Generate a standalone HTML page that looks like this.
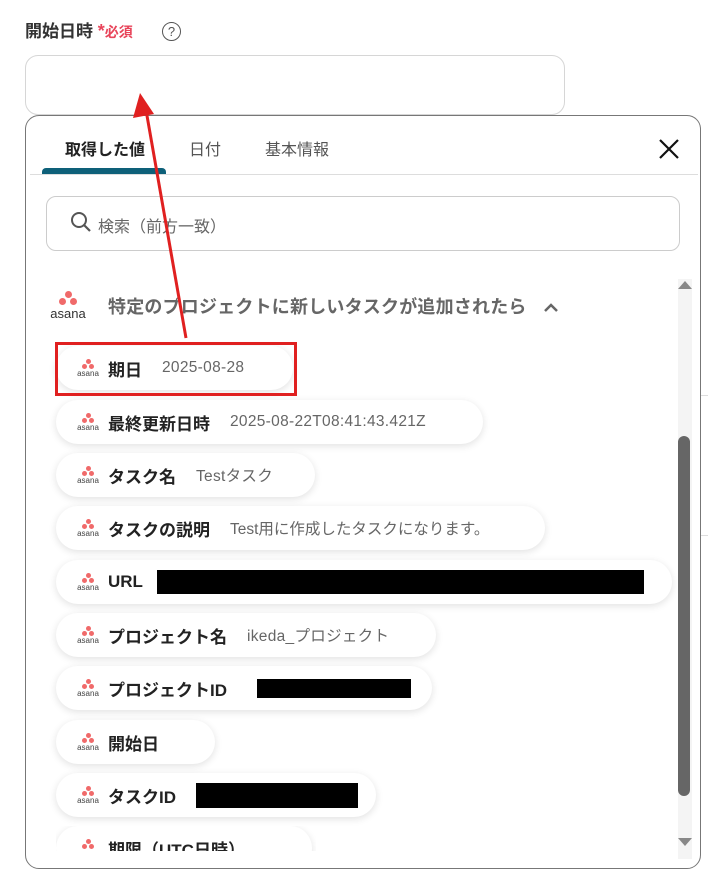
<!DOCTYPE html>
<html><head><meta charset="utf-8"><style>
body{margin:0;width:708px;height:869px;background:#fff;font-family:"Liberation Sans","Noto Sans CJK JP",sans-serif;position:relative;overflow:hidden;color:#222}
.a{position:absolute}
.pill{position:absolute;left:56px;height:44px;border-radius:22px;background:#fff;box-shadow:0 2px 8px rgba(0,0,0,.12);display:flex;align-items:center;white-space:nowrap}
.pill .lg{width:28px;margin-left:18px;margin-right:6px;text-align:center;font-size:8px;line-height:8px;color:#444}
.dots{position:relative;height:10px;width:12px;margin:0 auto 1px}
.dots i{position:absolute;width:5px;height:5px;border-radius:50%;background:#f06a6a}
.k{font-size:17px;font-weight:bold;color:#222;margin-right:20px}
.v{font-size:15.5px;color:#666;letter-spacing:.3px}
.blk{background:#000;height:24px}
</style></head><body>
<div class="a" style="left:25px;top:17px;font-size:17px;font-weight:bold;color:#333">開始日時 <span style="color:#e8445a;font-size:18px">*</span><span style="color:#e8445a;font-size:14px">必須</span></div>
<div class="a" style="left:162px;top:22px;width:17px;height:17px;border:1.5px solid #555;border-radius:50%;font-size:13px;text-align:center;line-height:17px;color:#555">?</div>
<div class="a" style="left:25px;top:55px;width:538px;height:58px;border:1px solid #d6d6d6;border-radius:13px"></div>
<div class="a" style="left:700px;top:395px;width:8px;height:1px;background:#ddd"></div>
<div class="a" style="left:700px;top:535px;width:8px;height:1px;background:#ddd"></div>
<div class="a" style="left:25px;top:115px;width:674px;height:752px;border:1px solid #777;border-radius:14px;background:#fff;overflow:hidden">
 <div class="a" style="left:39px;top:20px;font-size:16px;font-weight:bold;color:#222">取得した値</div>
 <div class="a" style="left:163px;top:20px;font-size:16px;color:#555">日付</div>
 <div class="a" style="left:239px;top:20px;font-size:16px;color:#555">基本情報</div>
 <svg class="a" style="left:632px;top:22px" width="22" height="22"><path d="M2 2L20 20M20 2L2 20" stroke="#111" stroke-width="2.2"/></svg>
 <div class="a" style="left:16px;top:52px;width:124px;height:6px;background:#0e6079;border-radius:4px 4px 0 0"></div>
 <div class="a" style="left:4px;top:58px;width:668px;height:1px;background:#ddd"></div>
 <div class="a" style="left:20px;top:80px;width:632px;height:53px;border:1px solid #ccc;border-radius:10px"></div>
 <svg class="a" style="left:44px;top:95px" width="22" height="22"><circle cx="9" cy="9" r="7" fill="none" stroke="#555" stroke-width="2"/><path d="M14 14L20 20" stroke="#555" stroke-width="2.2"/></svg>
 <div class="a" style="left:72px;top:97px;font-size:16px;color:#666">検索（前方一致）</div>
 <div class="a" style="left:20px;top:175px;width:44px;text-align:center;font-size:13px;color:#333"><div class="dots" style="width:18px;height:14px"><i style="left:6px;top:0;width:7px;height:7px"></i><i style="left:0;top:7px;width:7px;height:7px"></i><i style="left:11px;top:7px;width:7px;height:7px"></i></div>asana</div>
 <div class="a" style="left:82px;top:177px;font-size:18px;font-weight:bold;color:#666;letter-spacing:.2px">特定のプロジェクトに新しいタスクが追加されたら</div>
 <svg class="a" style="left:517px;top:185px" width="16" height="12"><path d="M2 10L8 4L14 10" fill="none" stroke="#666" stroke-width="2.5"/></svg>
 <div class="a" style="left:652px;top:163px;width:14px;height:580px;background:#f4f4f4"></div>
 <svg class="a" style="left:651px;top:163px" width="16" height="12"><path d="M1 10L8 2L15 10Z" fill="#888"/></svg>
 <svg class="a" style="left:651px;top:720px" width="16" height="12"><path d="M1 2L8 10L15 2Z" fill="#888"/></svg>
 <div class="a" style="left:652px;top:320px;width:12px;height:360px;background:#666;border-radius:6px"></div>
</div>
<div class="pill" style="top:346px;width:237px"><div class="lg"><div class="dots"><i style="left:3.5px;top:0"></i><i style="left:0;top:5px"></i><i style="left:7px;top:5px"></i></div>asana</div><span class="k">期日</span><span class="v">2025-08-28</span></div>
<div class="pill" style="top:400px;width:427px"><div class="lg"><div class="dots"><i style="left:3.5px;top:0"></i><i style="left:0;top:5px"></i><i style="left:7px;top:5px"></i></div>asana</div><span class="k">最終更新日時</span><span class="v">2025-08-22T08:41:43.421Z</span></div>
<div class="pill" style="top:453px;width:259px"><div class="lg"><div class="dots"><i style="left:3.5px;top:0"></i><i style="left:0;top:5px"></i><i style="left:7px;top:5px"></i></div>asana</div><span class="k">タスク名</span><span class="v">Testタスク</span></div>
<div class="pill" style="top:506px;width:489px"><div class="lg"><div class="dots"><i style="left:3.5px;top:0"></i><i style="left:0;top:5px"></i><i style="left:7px;top:5px"></i></div>asana</div><span class="k">タスクの説明</span><span class="v" style="letter-spacing:0">Test用に作成したタスクになります。</span></div>
<div class="pill" style="top:560px;width:616px"><div class="lg"><div class="dots"><i style="left:3.5px;top:0"></i><i style="left:0;top:5px"></i><i style="left:7px;top:5px"></i></div>asana</div><span class="k" style="margin-right:14px">URL</span><div class="blk" style="width:487px"></div></div>
<div class="pill" style="top:613px;width:380px"><div class="lg"><div class="dots"><i style="left:3.5px;top:0"></i><i style="left:0;top:5px"></i><i style="left:7px;top:5px"></i></div>asana</div><span class="k">プロジェクト名</span><span class="v">ikeda_プロジェクト</span></div>
<div class="pill" style="top:666px;width:376px"><div class="lg"><div class="dots"><i style="left:3.5px;top:0"></i><i style="left:0;top:5px"></i><i style="left:7px;top:5px"></i></div>asana</div><span class="k" style="margin-right:30px">プロジェクトID</span><div class="blk" style="width:154px;height:19px"></div></div>
<div class="pill" style="top:720px;width:159px"><div class="lg"><div class="dots"><i style="left:3.5px;top:0"></i><i style="left:0;top:5px"></i><i style="left:7px;top:5px"></i></div>asana</div><span class="k">開始日</span></div>
<div class="pill" style="top:773px;width:320px"><div class="lg"><div class="dots"><i style="left:3.5px;top:0"></i><i style="left:0;top:5px"></i><i style="left:7px;top:5px"></i></div>asana</div><span class="k">タスクID</span><div class="blk" style="width:162px;height:25px"></div></div>
<div style="position:absolute;left:56px;top:826px;width:260px;height:25px;overflow:hidden"><div class="pill" style="top:0;left:0;width:256px"><div class="lg"><div class="dots"><i style="left:3.5px;top:0"></i><i style="left:0;top:5px"></i><i style="left:7px;top:5px"></i></div>asana</div><span class="k">期限（UTC日時）</span></div></div>
<div class="a" style="left:55px;top:342px;width:236px;height:48px;border:3px solid #e02020"></div>
<svg class="a" style="left:0;top:0" width="708" height="869"><path d="M186 338L146 110" stroke="#e02020" stroke-width="3"/><path d="M140 93L133 118L154 114Z" fill="#e02020"/></svg>
</body></html>
